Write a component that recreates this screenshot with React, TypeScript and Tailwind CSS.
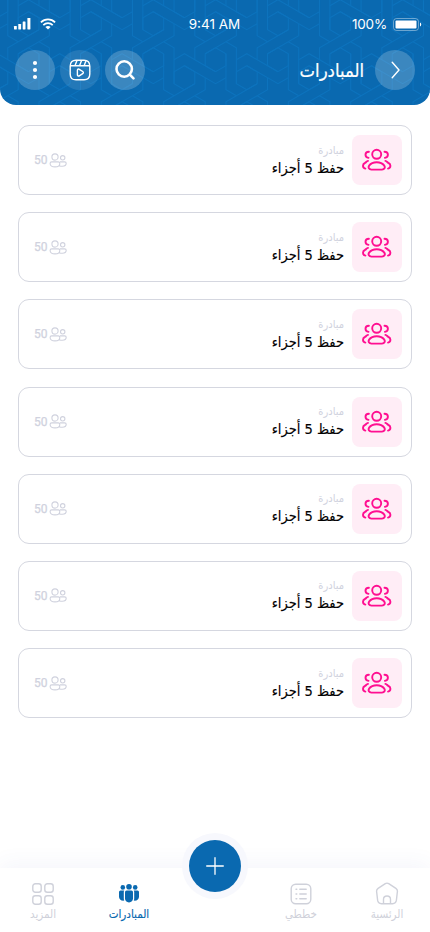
import React from 'react';

interface Initiative {
  id: number;
  kind: string;
  title: string;
  members: number;
}

interface NavItemProps {
  label: string;
  active?: boolean;
  className: string;
  children: React.ReactNode;
}

const initiatives: Initiative[] = Array.from({ length: 7 }, (_, i) => ({
  id: i + 1,
  kind: 'مبادرة',
  title: 'حفظ 5 أجزاء',
  members: 50
}));

const HEX = 'M0-12 10.39-6V6L0 12-10.39 6V-6z';

// Interlaced hexagon bands, two knots per lattice cell
const HeaderPattern = () => {
  const cells: { x: number; y: number }[] = [];
  for (let row = -2; row <= 2; row++) {
    for (let col = -5; col <= 5; col++) {
      cells.push({ x: 215.6 + col * 62.35 + (row % 2 ? 31.18 : 0), y: 59.7 + row * 54 });
    }
  }
  return (
    <svg className="absolute inset-0" width="430" height="105" viewBox="0 0 430 105" fill="none" stroke="#0d73bd" strokeWidth="1.1">
      <defs>
        <g id="knot">
          <path d={HEX} />
          <path d="M10.39-6V30L20.78 36M0 12L-31.18-6L-41.57 0M-10.39-6L20.78-24V-36" />
        </g>
        <g id="knots">
          <use href="#knot" />
          <use href="#knot" transform="translate(-31.18 18) rotate(180)" />
        </g>
      </defs>
      {cells.map(c => <use key={`${c.x}-${c.y}`} href="#knots" x={c.x} y={c.y} />)}
    </svg>
  );
};

const PeopleIcon = () => (
  <svg width="30" height="24" viewBox="0 0 30 24" fill="none" stroke="#ff0f91" strokeWidth="1.9" strokeLinecap="round">
    <circle cx="14.7" cy="6.3" r="4.5" />
    <path d="M14.7 14.300c3.700 0 6.300 1.600 7.600 3.300 1.300 1.900.1 4-2.300 4H9.400c-2.400 0-3.600-2.100-2.300-4 1.300-1.700 3.900-3.300 7.600-3.300z" />
    <path d="M6.900 3.700C4.600 3.800 3.500 5.100 3.500 6.700S4.500 9.500 6.500 9.900M22.500 3.700c2.300.1 3.400 1.400 3.400 3s-1 2.800-3 3.200" />
    <path d="M6 12.900C4.600 13.100 4.300 14.100 3 14.900c-1.400.8-2 1.700-2 2.800 0 1.500 1 2.600 2.400 2.900M23.400 12.900c1.400.2 1.700 1.200 3 2 1.400.8 2 1.700 2 2.800 0 1.500-1 2.600-2.400 2.900" />
  </svg>
);

const MembersIcon = () => (
  <svg width="18" height="15" viewBox="0 0 18 15" fill="none" stroke="#d0d2de" strokeWidth="1.1">
    <circle cx="6" cy="4" r="3.1" />
    <circle cx="13.700" cy="4.800" r="2.200" />
    <path d="M2.700 8.900h6.600q1.500 0 1.500 1.500c0 2.100-1.900 3.500-4.800 3.500s-4.900-1.400-4.900-3.500Q1.100 8.900 2.700 8.900zM11 8.900h4.600q1.600 0 1.600 1.400c0 1.700-1.500 3-3.900 3-1.300 0-2.200-.2-3-.6" />
  </svg>
);

const NavItem: React.FC<NavItemProps> = ({ label, active, className, children }) => (
  <a className={`flex shrink-0 flex-col items-center ${active ? 'text-[#0a69b0]' : 'text-[#cfd1da]'} ${className}`}>
    <span className="flex h-[25px] items-center">{children}</span>
    <span dir="rtl" className={`text-[11.500px] leading-[16px] whitespace-nowrap ${active ? '[-webkit-text-stroke:0.15px_currentColor]' : ''}`}>{label}</span>
  </a>
);

const StatusBar = () => (
  <div className="relative grid h-[48px] grid-cols-3 items-center pr-[8px] pl-[13px] font-['Inter',sans-serif] text-white">
    <div className="flex items-center gap-[9px]">
      <svg width="18" height="12" viewBox="0 0 18 12" fill="#fff">
        <rect x="1" y="8" width="2.800" height="3.500" rx=".4" />
        <rect x="5.300" y="6" width="2.800" height="5.500" rx=".4" />
        <rect x="9.700" y="3.500" width="2.800" height="8" rx=".4" />
        <rect x="14.400" y="0" width="3" height="11.500" rx=".4" />
      </svg>
      <svg width="16" height="12" viewBox="0 0 16 12" fill="none" stroke="#fff" strokeWidth="1.700">
        <path d="M.9 4.400c4-4 10.200-4 14.200 0M3.300 7.100c2.600-2.600 6.800-2.600 9.400 0" />
        <path d="M5.400 8.900c1.500-1.300 3.700-1.300 5.200 0L8 11.400z" fill="#fff" stroke="none" />
      </svg>
    </div>
    <span className="pr-[6px] text-center text-[13.500px] whitespace-nowrap">9:41 AM</span>
    <div className="flex items-center justify-end gap-[6px]">
      <span className="text-[13.500px] tracking-[-0.2px]">100%</span>
      <svg width="29" height="13" viewBox="0 0 29 13" fill="none">
        <rect x=".5" y=".5" width="25" height="12" rx="3" stroke="#fff" strokeOpacity=".4" />
        <rect x="2.500" y="2.500" width="21" height="8" rx="1" fill="#fff" />
        <path d="M27 4.500c1.700.6 1.700 3.400 0 4z" fill="#fff" />
      </svg>
    </div>
  </div>
);

const Header = () => (
  <header className="relative h-[105px] shrink-0 overflow-hidden rounded-b-[16px] bg-[#0a69b0]">
    <HeaderPattern />
    <StatusBar />
    <div className="relative flex items-center px-[15px] pt-[2px]">
      <div className="flex gap-[5px]">
        <button className="flex size-10 items-center justify-center rounded-full bg-white/20">
          <svg width="6" height="20" viewBox="0 0 6 20" fill="#fff">
            <circle cx="3" cy="3" r="2.100" />
            <circle cx="3" cy="10" r="2.100" />
            <circle cx="3" cy="17" r="2.100" />
          </svg>
        </button>
        <button className="flex size-10 items-center justify-center rounded-full bg-white/10">
          <svg width="22" height="22" viewBox="0 0 22 22" fill="none" stroke="#fff" strokeWidth="1.400" strokeLinecap="round" strokeLinejoin="round">
            <path d="M1.200 7.200C1.200 3 3 1.200 7 1.200h8c4 0 5.800 1.800 5.800 6V15c0 4-1.800 5.800-5.800 5.800H7c-4 0-5.800-1.800-5.800-5.800zM1.500 6.700h19M8 1.400L6 6.500M12.600 1.400l-2 5.100M17 1.800l-1.800 4.700" />
            <path d="M8.400 11.400c0-1.200.9-1.700 1.900-1.100l3.400 2.200c.9.600.9 1.500 0 2.100l-3.400 2.200c-1 .6-1.900.1-1.900-1.100z" />
          </svg>
        </button>
        <button className="flex size-10 items-center justify-center rounded-full bg-white/20">
          <svg width="22" height="22" viewBox="0 0 22 22" fill="none" stroke="#fff" strokeWidth="2.600" strokeLinecap="round">
            <circle cx="10.200" cy="10" r="7.700" />
            <path d="M15.800 15.600l3.700 3.700" />
          </svg>
        </button>
      </div>
      <h1 dir="rtl" className="mr-[11px] ml-auto pt-px text-[18.300px] leading-[24px] whitespace-nowrap text-white [-webkit-text-stroke:0.2px_currentColor]">المبادرات</h1>
      <button className="flex size-10 items-center justify-center rounded-full bg-white/20">
        <svg width="10" height="18" viewBox="0 0 10 18" fill="none" stroke="#fff" strokeWidth="1.400" strokeLinecap="round" strokeLinejoin="round">
          <path d="M2.200 1.300L9 9l-6.800 7.700" />
        </svg>
      </button>
    </div>
  </header>
);

const InitiativeCard: React.FC<{ item: Initiative }> = ({ item }) => (
  <div className="flex h-[70px] items-center rounded-[11px] border border-[#d5d7e0] pr-[9px] pl-[15px]">
    <div className="flex items-center gap-px text-[#d0d2de]">
      <span className="w-[14px] font-['Roboto',sans-serif] text-[12px] leading-none whitespace-nowrap [-webkit-text-stroke:0.25px_currentColor]">{item.members}</span>
      <MembersIcon />
    </div>
    <div dir="rtl" className="mr-[8px] ml-auto pt-[2px] text-right whitespace-nowrap">
      <div className="text-[11px] leading-[14px] text-[#d0d2de]">{item.kind}</div>
      <div className="text-[14.500px] leading-[21px] text-black [-webkit-text-stroke:0.15px_currentColor]">{item.title}</div>
    </div>
    <div className="flex size-[50px] items-center justify-center rounded-[8px] bg-[#ffedf6]">
      <PeopleIcon />
    </div>
  </div>
);

const BottomNav = () => (
  <nav className="relative flex h-[64px] shrink-0 justify-between bg-white pt-[13px] shadow-[0_-4px_22px_rgba(70,90,180,0.06)]">
    <NavItem label="المزيد" className="w-[86px]">
      <svg width="22" height="22" viewBox="0 0 22 22" fill="none" stroke="currentColor" strokeWidth="1.400">
        <rect x=".8" y=".8" width="8.400" height="8.400" rx="2.500" />
        <rect x="12.800" y=".8" width="8.400" height="8.400" rx="2.500" />
        <rect x=".8" y="12.800" width="8.400" height="8.400" rx="2.500" />
        <rect x="12.800" y="12.800" width="8.400" height="8.400" rx="2.500" />
      </svg>
    </NavItem>
    <NavItem label="المبادرات" active className="w-[86px]">
      <svg width="20" height="19" viewBox="0 0 20 19" fill="currentColor">
        <circle cx="10" cy="2.800" r="2.800" />
        <circle cx="3.800" cy="3.400" r="2.300" />
        <circle cx="16.200" cy="3.400" r="2.300" />
        <path d="M6 8.200q0-1.600 1.600-1.600h4.800q1.600 0 1.600 1.600v6.100c0 2.400-1.600 4.100-4 4.100s-4-1.700-4-4.100z" />
        <path d="M1.500 6.600h3.700Q4.800 7.300 4.800 8.200v6.200q0 1.200.5 2.200C2 17 0 15.200 0 12.700V8.100Q0 6.600 1.500 6.600zM18.500 6.600h-3.700q.4.700.4 1.600v6.200q0 1.200-.5 2.200c3.300.4 5.300-1.400 5.300-3.900V8.100q0-1.500-1.500-1.500z" />
      </svg>
    </NavItem>
    <div className="w-[86px]" />
    <NavItem label="خططي" className="w-[86px]">
      <svg width="22" height="22" viewBox="0 0 22 22" fill="none" stroke="currentColor" strokeWidth="1.400" strokeLinecap="round">
        <rect x="1.200" y="1.200" width="19.600" height="19.600" rx="4.500" />
        <path d="M6 6.300h.8M6 11h.8M6 15.700h.8M9.800 6.300h6.400M9.800 11h6.400M9.800 15.700h6.400" />
      </svg>
    </NavItem>
    <NavItem label="الرئسية" className="w-[86px]">
      <svg width="24" height="23" viewBox="0 0 24 23" fill="none" stroke="currentColor" strokeWidth="1.400" strokeLinejoin="round">
        <path d="M10.300 1.700q1.700-1.100 3.400 0l7.200 4.700q1.700 1.200 1.500 3.100l-1 8.700q-.5 3.500-3.900 3.500H6.500q-3.400 0-3.900-3.500l-1-8.700Q1.400 7.600 3.100 6.400z" />
        <path d="M8.500 21.700v-4.200c0-4.600 7-4.600 7 0v4.200" />
      </svg>
    </NavItem>
    <div className="absolute -top-[35px] left-[182px] flex size-[66px] items-center justify-center rounded-full bg-[#f7f8fd]">
      <button className="flex size-[52px] items-center justify-center rounded-full bg-[#0a69b0]">
        <svg width="18" height="18" viewBox="0 0 18 18" stroke="#fff" strokeWidth="1.300" strokeLinecap="round">
          <path d="M9 .7v16.600M.7 9h16.600" />
        </svg>
      </button>
    </div>
  </nav>
);

export default function App() {
  return (
    <div className="flex h-[932px] w-[430px] flex-col overflow-hidden bg-white font-['DejaVu_Sans_Condensed','DejaVu_Sans',sans-serif]">
      <Header />
      <main className="flex flex-1 flex-col gap-[17.200px] px-[18px] pt-[20px]">
        {initiatives.map(item => <InitiativeCard key={item.id} item={item} />)}
      </main>
      <BottomNav />
    </div>
  );
}
